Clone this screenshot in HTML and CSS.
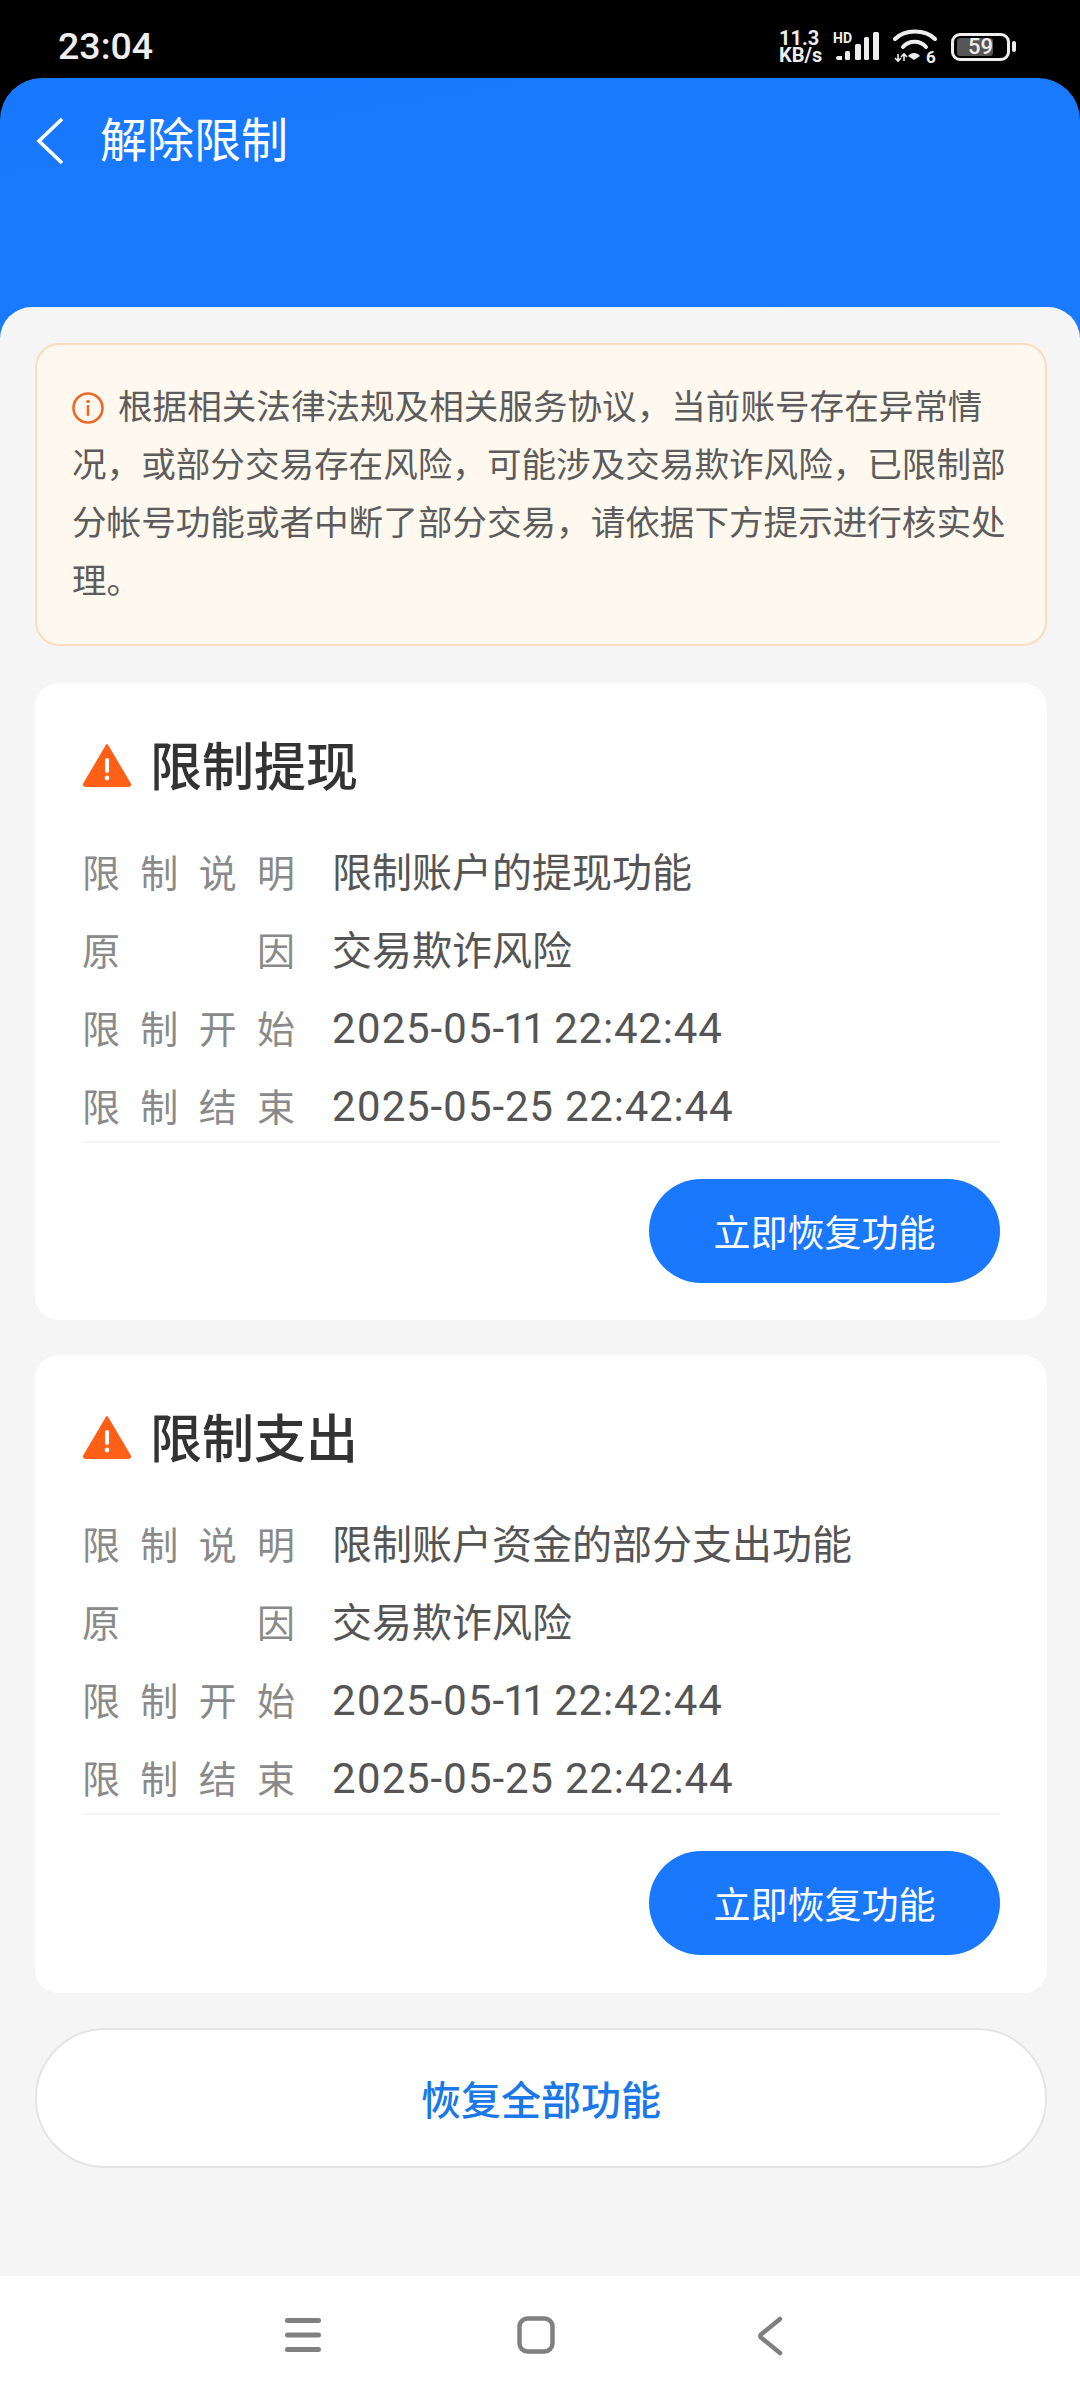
FILE: index.html
```html
<!DOCTYPE html>
<html lang="zh-CN">

<head>
    <meta charset="UTF-8">
    <meta name="viewport" content="width=device-width, initial-scale=1.0">
    <title>解除限制</title>
    <link rel="stylesheet" href="styles.css">
</head>

<body>
    <div class="phone">
        <!-- status bar -->
        <div class="status">
            <div class="time">23:04</div>
            <div class="status_icons">
                <div class="speed">
                    <div>11.3</div>
                    <div>KB/s</div>
                </div>
                <svg class="signal" width="46" height="38" viewBox="0 -4 46 38">
                    <text x="0" y="11" class="hd">HD</text>
                    <path d="M5 24h4v4H5a2 2 0 0 1-2-2a2 2 0 0 1 2-2z" fill="#eee" />
                    <rect x="12" y="19" width="5" height="9" rx="1.5" fill="#eee" />
                    <rect x="22" y="12" width="6" height="16" rx="1.5" fill="#eee" />
                    <rect x="31" y="5" width="5" height="23" rx="1.5" fill="#eee" />
                    <rect x="40" y="0" width="6" height="28" rx="1.5" fill="#eee" />
                </svg>
                <svg class="wifi" width="44" height="40" viewBox="0 -2 44 40">
                    <path d="M2 10C12 0 32 0 42 10" fill="none" stroke="#eee" stroke-width="4" stroke-linecap="round" />
                    <path d="M10 18C16 11 27 11 33 18" fill="none" stroke="#eee" stroke-width="4" stroke-linecap="round" />
                    <path d="M15 27c3-4 9-4 12 0l-6 4z" fill="#eee" />
                    <path d="M5 25v7M2 29l3 3 3-3M11 32v-7M8 28l3-3 3 3" fill="none" stroke="#eee" stroke-width="1.6" />
                    <text x="33" y="34" class="wifi_six">6</text>
                </svg>
                <div class="battery">
                    <div class="battery_body">
                        <div class="battery_fill"></div>
                        <span>59</span>
                    </div>
                    <div class="battery_cap"></div>
                </div>
            </div>
        </div>

        <div class="blue_bg">
            <div class="topbar">
                <svg width="30" height="48" viewBox="0 0 30 48">
                    <path d="M27 2L4 24l23 22" fill="none" stroke="#fff" stroke-width="3.6" />
                </svg>
                <h1>解除限制</h1>
            </div>

            <div class="sheet">
                <div class="notice">
                    <svg class="notice_icon" width="32" height="32" viewBox="0 0 32 32">
                        <circle cx="16" cy="16" r="14.5" fill="none" stroke="#e8692c" stroke-width="2.6" />
                        <circle cx="16" cy="9.5" r="1.8" fill="#e8692c" />
                        <rect x="14.7" y="13" width="2.6" height="11" rx="1" fill="#e8692c" />
                    </svg>根据相关法律法规及相关服务协议，当前账号存在异常情况，或部分交易存在风险，可能涉及交易欺诈风险，已限制部分帐号功能或者中断了部分交易，请依据下方提示进行核实处理。
                </div>

                <div class="card">
                    <div class="card_title">
                        <svg width="50" height="44" viewBox="0 0 50 44">
                            <path d="M25 2L48 41a1.5 1.5 0 0 1-1.3 2H3.3A1.5 1.5 0 0 1 2 41z" fill="#ff5f16" stroke="#ff5f16" stroke-width="2" stroke-linejoin="round" />
                            <rect x="23" y="15" width="4" height="15" rx="2" fill="#fff" />
                            <circle cx="25" cy="35" r="2.4" fill="#fff" />
                        </svg>
                        <h2>限制提现</h2>
                    </div>
                    <div class="rows">
                        <div class="row"><span class="lab">限制说明</span><span class="val">限制账户的提现功能</span></div>
                        <div class="row"><span class="lab">原因</span><span class="val">交易欺诈风险</span></div>
                        <div class="row"><span class="lab">限制开始</span><span class="val_num">2025-05-11 22:42:44</span></div>
                        <div class="row"><span class="lab">限制结束</span><span class="val_num">2025-05-25 22:42:44</span></div>
                    </div>
                    <div class="card_foot"><div class="btn">立即恢复功能</div></div>
                </div>

                <div class="card">
                    <div class="card_title">
                        <svg width="50" height="44" viewBox="0 0 50 44">
                            <path d="M25 2L48 41a1.5 1.5 0 0 1-1.3 2H3.3A1.5 1.5 0 0 1 2 41z" fill="#ff5f16" stroke="#ff5f16" stroke-width="2" stroke-linejoin="round" />
                            <rect x="23" y="15" width="4" height="15" rx="2" fill="#fff" />
                            <circle cx="25" cy="35" r="2.4" fill="#fff" />
                        </svg>
                        <h2>限制支出</h2>
                    </div>
                    <div class="rows">
                        <div class="row"><span class="lab">限制说明</span><span class="val">限制账户资金的部分支出功能</span></div>
                        <div class="row"><span class="lab">原因</span><span class="val">交易欺诈风险</span></div>
                        <div class="row"><span class="lab">限制开始</span><span class="val_num">2025-05-11 22:42:44</span></div>
                        <div class="row"><span class="lab">限制结束</span><span class="val_num">2025-05-25 22:42:44</span></div>
                    </div>
                    <div class="card_foot"><div class="btn">立即恢复功能</div></div>
                </div>

                <div class="btn_all">恢复全部功能</div>
            </div>

            <!-- system nav -->
            <div class="nav">
                <svg width="36" height="36" viewBox="0 0 36 36">
                    <path d="M2.5 3.5h31M2.5 18h31M2.5 32.5h31" fill="none" stroke="#808080" stroke-width="5" stroke-linecap="round" />
                </svg>
                <svg width="38" height="38" viewBox="0 0 38 38">
                    <rect x="2.5" y="2.5" width="33" height="33" rx="8" fill="none" stroke="#808080" stroke-width="4.5" />
                </svg>
                <svg width="26" height="40" viewBox="0 0 26 40">
                    <path d="M23 3L4 18.5a2 2 0 0 0 0 3L23 37" fill="none" stroke="#808080" stroke-width="4.5" stroke-linecap="round" />
                </svg>
            </div>
        </div>
    </div>
</body>

</html>
```

FILE: styles.css
```css
* {
    box-sizing: border-box;
}

body {
    margin: 0;
    padding: 0;
    background-color: #000;
    font-family: "Noto Sans CJK SC", "Noto Sans", sans-serif;
}

.phone {
    width: 1080px;
    height: 2400px;
    display: flex;
    flex-direction: column;
    overflow: hidden;
}

/* Status bar */

.status {
    height: 78px;
    flex: none;
    padding: 15px 64px 0 58px;
    display: flex;
    align-items: center;
    justify-content: space-between;
    color: #eee;
    font-family: Roboto, sans-serif;
}

.time {
    font-size: 37.5px;
    font-weight: 500;
    line-height: 1;
}

.status_icons {
    display: flex;
    align-items: center;
    gap: 14px;
}

.speed {
    width: 46px;
    margin-right: -6px;
    font-size: 20px;
    font-weight: 700;
    line-height: 17px;
}

.hd {
    font-family: Roboto, sans-serif;
    font-size: 14px;
    font-weight: 700;
    fill: #eee;
}

.wifi_six {
    font-family: Roboto, sans-serif;
    font-size: 17px;
    font-weight: 700;
    fill: #eee;
}

.battery {
    display: flex;
    align-items: center;
    gap: 2px;
}

.battery_body {
    position: relative;
    width: 59px;
    height: 28px;
    border: 3px solid #eee;
    border-radius: 9px;
    display: flex;
    align-items: center;
    justify-content: center;
    font-size: 22px;
    font-weight: 500;
}

.battery_fill {
    position: absolute;
    left: 3px;
    top: 2px;
    bottom: 2px;
    width: 36px;
    background-color: #555;
    border-radius: 3px;
}

.battery_body span {
    position: relative;
}

.battery_cap {
    width: 4px;
    height: 11px;
    border-radius: 2px;
    background-color: #eee;
}

/* Blue area */

.blue_bg {
    flex: 1;
    display: flex;
    flex-direction: column;
    background: linear-gradient(170deg, #1878ff, #2085ff 80%);
    border-radius: 42px 42px 0 0;
    overflow: hidden;
}

.topbar {
    height: 229px;
    flex: none;
    padding: 39px 0 0 35px;
    display: flex;
    align-items: flex-start;
    color: #fff;
}

.topbar h1 {
    margin: -14px 0 0 35px;
    font-size: 47px;
    font-weight: 400;
    line-height: 68px;
}

.sheet {
    flex: 1;
    background-color: #f5f5f5;
    border-radius: 32px 32px 0 0;
    padding: 36px 33px 0 35px;
    display: flex;
    flex-direction: column;
    gap: 35px;
}

.notice {
    height: 303px;
    margin-bottom: 2px;
    padding: 30px 36px 0 35px;
    background-color: #fff8ee;
    border: 2px solid #fbdcc0;
    border-radius: 24px;
    font-size: 34.6px;
    line-height: 58px;
    color: #5c5c5c;
}

.notice_icon {
    vertical-align: -5px;
    margin-right: 14px;
}

/* Cards */

.card {
    background-color: #fff;
    border-radius: 24px;
    padding: 0 47px;
}

.card:nth-of-type(2) {
    height: 637px;
}

.card:nth-of-type(3) {
    height: 638px;
}

.card_title {
    height: 148px;
    padding-top: 16px;
    display: flex;
    align-items: center;
    gap: 18px;
}

.card_title h2 {
    margin: -4px 0 0 0;
    font-size: 52px;
    font-weight: 500;
    color: #333;
}

.rows {
    height: 312px;
    border-bottom: 2px solid #f4f4f4;
}

.row {
    height: 78px;
    display: flex;
    align-items: center;
}

.lab {
    width: 250px;
    flex: none;
    padding-right: 37px;
    color: #8a8a8a;
    font-size: 38px;
    text-align: justify;
    text-align-last: justify;
}

.val {
    color: #555;
    font-size: 40px;
}

.val_num {
    padding-top: 4px;
    color: #555;
    font-family: Roboto, sans-serif;
    font-size: 42px;
    font-variant-numeric: proportional-nums;
    letter-spacing: 0.8px;
}

.card_foot {
    display: flex;
    justify-content: flex-end;
    padding-top: 36px;
}

.btn {
    width: 351px;
    height: 104px;
    border-radius: 52px;
    background-color: #1a78ff;
    color: #fff;
    font-size: 37px;
    display: flex;
    align-items: center;
    justify-content: center;
}

.btn_all {
    height: 140px;
    border: 2px solid #e4e4e4;
    border-radius: 70px;
    background-color: #fff;
    color: #1a78e8;
    font-size: 40px;
    font-weight: 500;
    display: flex;
    align-items: center;
    justify-content: center;
}

/* System nav */

.nav {
    height: 124px;
    flex: none;
    background-color: #fff;
    display: flex;
    align-items: flex-start;
    padding: 41px 0 0 285px;
}

.nav svg:nth-child(2) {
    margin: -1px 0 0 196px;
}

.nav svg:nth-child(3) {
    margin: -1px 0 0 202px;
}
```
